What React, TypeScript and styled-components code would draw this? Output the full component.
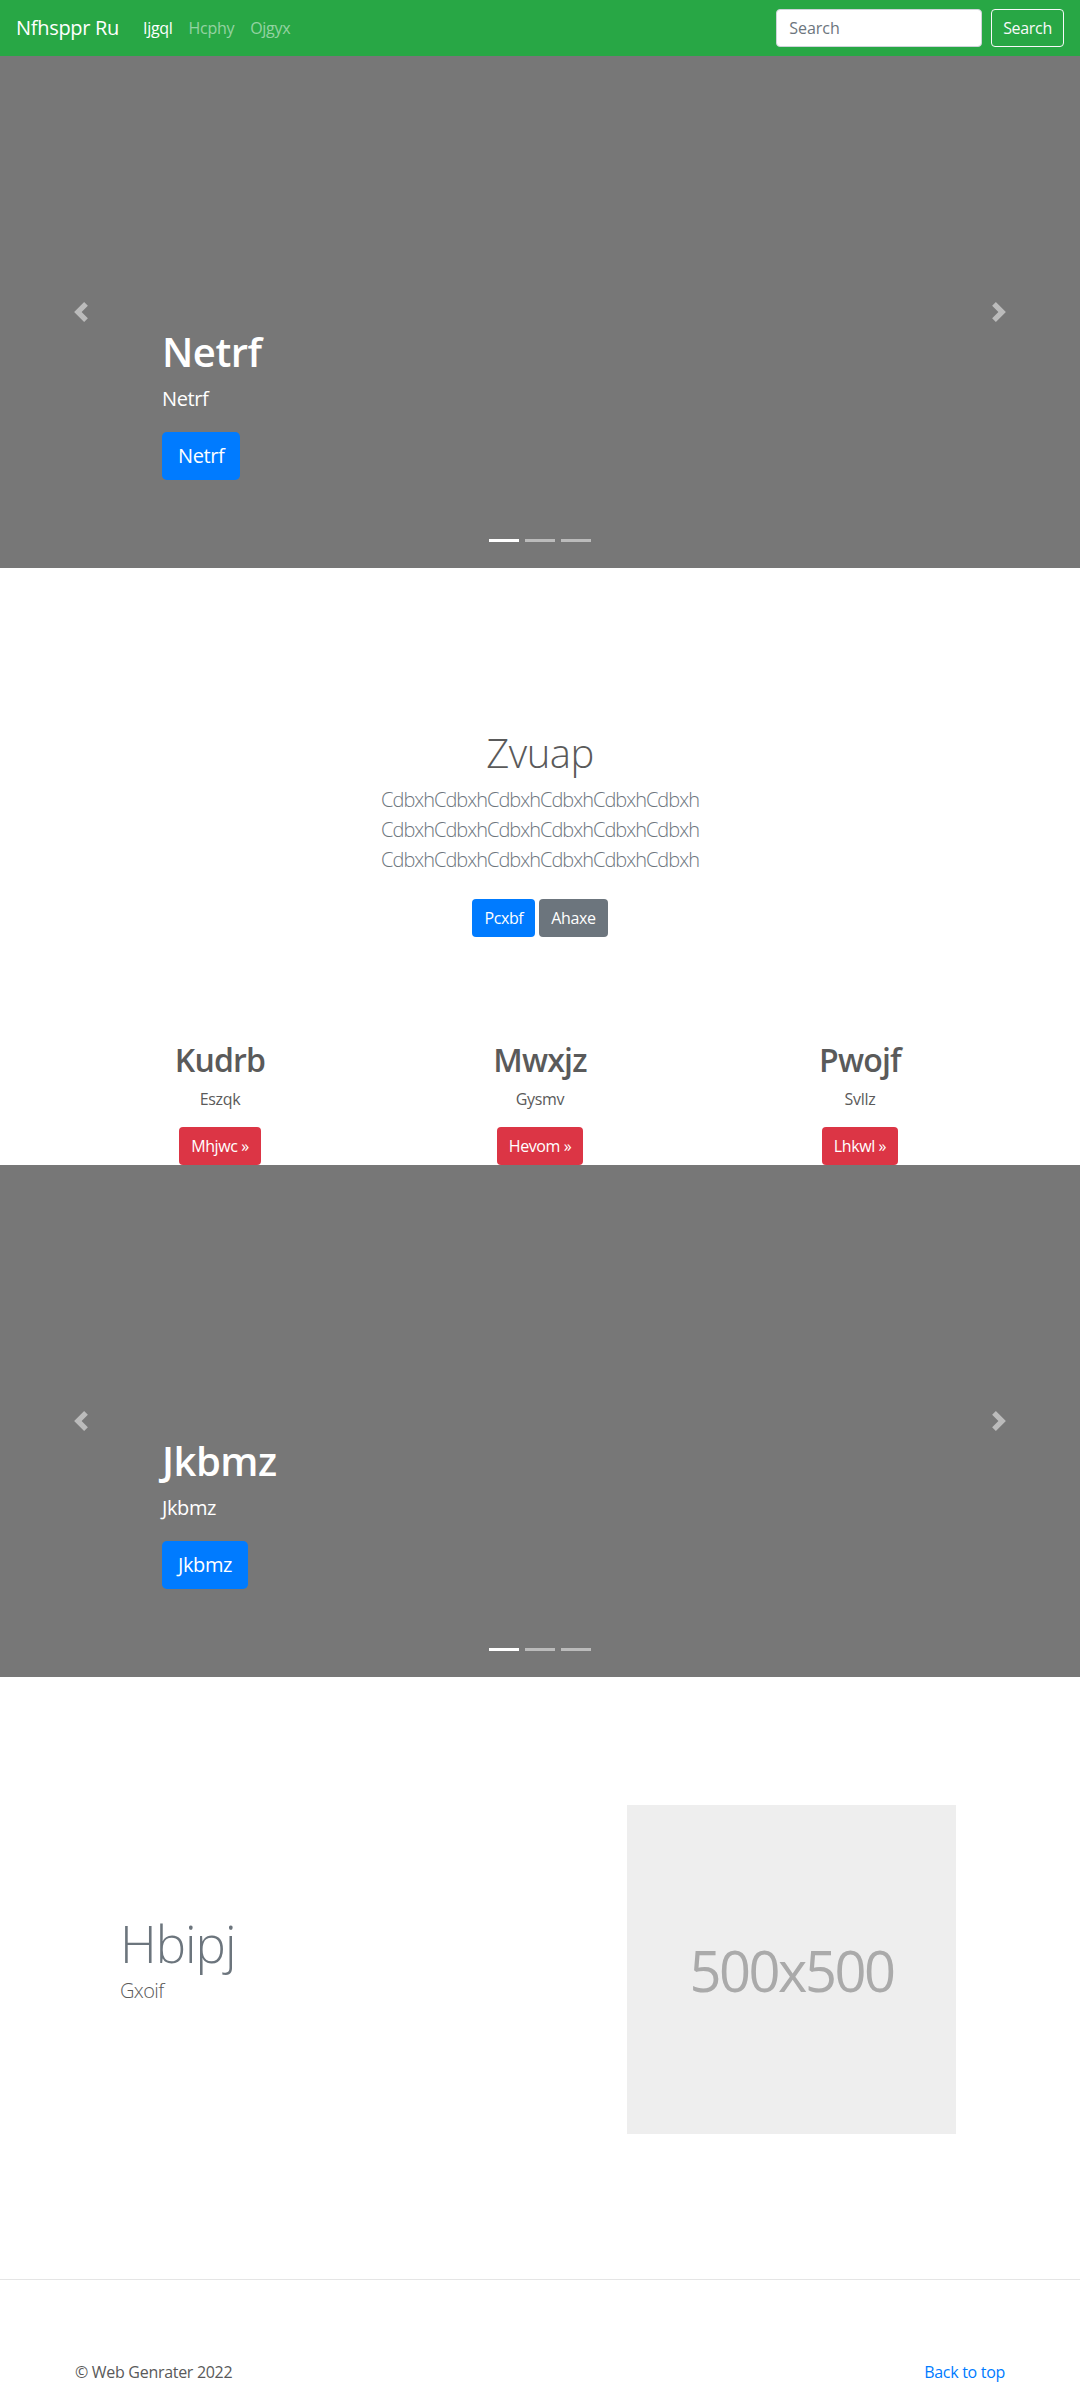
import React from "react";
import styled, { createGlobalStyle } from "styled-components";

const GlobalStyle = createGlobalStyle`
  * { box-sizing: border-box; }
  html, body { margin: 0; padding: 0; }
  body {
    font-family: "Open Sans", "Noto Sans", Arial, sans-serif;
    font-size: 16px;
    line-height: 1.5;
    color: #5a5a5a;
    background: #fff;
  }
`;

const Navbar = styled.nav`
  height: 56px;
  display: flex;
  align-items: center;
  padding: 0 16px;
  background: #28a745;
`;

const Brand = styled.a`
  font-size: 20px;
  line-height: 30px;
  color: #fff;
  margin-right: 16px;
  text-decoration: none;
  letter-spacing: -0.3px;
`;

const NavList = styled.div`
  display: flex;
  align-items: center;
`;

const NavLink = styled.a<{ $active?: boolean }>`
  padding: 8px;
  line-height: 24px;
  font-size: 16px;
  color: ${(p) => (p.$active ? "#fff" : "rgba(255,255,255,0.5)")};
  text-decoration: none;
  letter-spacing: -0.3px;
`;

const SearchForm = styled.form`
  margin-left: auto;
  display: flex;
  align-items: center;
  gap: 9px;
`;

const SearchInput = styled.input`
  width: 206px;
  height: 38px;
  padding: 6px 12px;
  font-family: inherit;
  font-size: 16px;
  color: #495057;
  background: #fff;
  border: 1px solid #ced4da;
  border-radius: 4px;
  outline: none;
  &::placeholder {
    color: #6c757d;
  }
`;

const OutlineButton = styled.button`
  height: 38px;
  padding: 0 11px;
  font-family: inherit;
  font-size: 16px;
  color: #f8f9fa;
  background: transparent;
  border: 1px solid #f8f9fa;
  border-radius: 4px;
  letter-spacing: -0.3px;
`;

const CarouselFrame = styled.section`
  position: relative;
  height: 512px;
  background: #777;
  overflow: hidden;
`;

const Caption = styled.div`
  position: absolute;
  left: 15%;
  right: 15%;
  bottom: 48px;
  padding: 20px 0;
  color: #fff;
  text-align: left;
  z-index: 2;
`;

const CaptionTitle = styled.h1`
  margin: 0 0 8px;
  font-size: 40px;
  line-height: 48px;
  font-weight: 600;
  letter-spacing: -0.5px;
`;

const CaptionText = styled.p`
  margin: 0 0 18px;
  font-size: 20px;
  line-height: 30px;
  letter-spacing: -0.4px;
`;

const CaptionActions = styled.div`
  display: flex;
  margin-bottom: 20px;
`;

const PrimaryLargeButton = styled.a`
  display: inline-flex;
  align-items: center;
  height: 48px;
  padding: 0 16px;
  font-size: 20px;
  color: #fff;
  background: #007bff;
  border-radius: 4.8px;
  text-decoration: none;
  letter-spacing: -0.4px;
`;

const Control = styled.a<{ $side: "left" | "right" }>`
  position: absolute;
  top: 0;
  bottom: 0;
  ${(p) => (p.$side === "left" ? "left: 0;" : "right: 0;")}
  width: 15%;
  display: flex;
  align-items: center;
  justify-content: center;
  opacity: 0.5;
  z-index: 1;
`;

const Indicators = styled.ol`
  position: absolute;
  left: 0;
  right: 0;
  bottom: 16px;
  margin: 0;
  padding: 0;
  list-style: none;
  display: flex;
  justify-content: center;
  z-index: 3;
`;

const Indicator = styled.li<{ $active?: boolean }>`
  width: 30px;
  height: 3px;
  margin: 10px 3px;
  background: ${(p) => (p.$active ? "#fff" : "rgba(255,255,255,0.5)")};
`;

const Hero = styled.section`
  padding-top: 161px;
  text-align: center;
`;

const HeroTitle = styled.h1`
  margin: 0 0 8px;
  font-size: 40px;
  line-height: 48px;
  font-weight: 300;
  color: #5a5a5a;
  letter-spacing: -0.5px;
`;

const HeroLead = styled.p`
  width: 420px;
  margin: 0 auto 16px;
  font-size: 20px;
  line-height: 30px;
  font-weight: 300;
  color: #6c757d;
  letter-spacing: -1px;
`;

const HeroActions = styled.div`
  display: flex;
  justify-content: center;
  gap: 4px;
  padding: 8px 0 24px;
`;

const SmallButton = styled.a<{ $tone: "primary" | "secondary" | "danger" }>`
  display: inline-flex;
  align-items: center;
  height: 38px;
  padding: 0 12px;
  font-size: 16px;
  color: #fff;
  border-radius: 4px;
  text-decoration: none;
  letter-spacing: -0.4px;
  background: ${(p) =>
    p.$tone === "primary" ? "#007bff" : p.$tone === "secondary" ? "#6c757d" : "#dc3545"};
`;

const Marketing = styled.div`
  width: 960px;
  margin: 80px auto 0;
  display: grid;
  grid-template-columns: repeat(3, 1fr);
  text-align: center;
`;

const MarketingCol = styled.div`
  display: flex;
  flex-direction: column;
  align-items: center;
  padding: 0 15px;
`;

const MarketingTitle = styled.h2`
  margin: 0 0 8px;
  font-size: 32px;
  line-height: 38.4px;
  font-weight: 600;
  color: #5a5a5a;
  letter-spacing: -0.8px;
`;

const MarketingText = styled.p`
  margin: 0 0 16px;
  font-size: 16px;
  line-height: 24px;
  letter-spacing: -0.3px;
`;

const Featurette = styled.section`
  padding: 128px 124px 145px 120px;
  display: grid;
  grid-template-columns: 1fr 329px;
  align-items: center;
`;

const FeaturetteHeading = styled.h2`
  margin: 0 0 8px;
  font-size: 51px;
  line-height: 50px;
  font-weight: 300;
  color: #6c757d;
  letter-spacing: -1px;
`;

const FeaturetteLead = styled.p`
  margin: 0 0 16px;
  font-size: 20px;
  line-height: 30px;
  font-weight: 300;
  color: #5a5a5a;
  letter-spacing: -0.6px;
`;

const Placeholder = styled.div`
  width: 329px;
  height: 329px;
  background: #eee;
  color: #aaa;
  display: flex;
  align-items: center;
  justify-content: center;
  font-size: 56px;
  letter-spacing: -2.5px;
`;

const Divider = styled.hr`
  margin: 0;
  border: 0;
  border-top: 1px solid rgba(0, 0, 0, 0.1);
`;

const Footer = styled.footer`
  padding: 80px 75px 0;
  display: flex;
  justify-content: space-between;
`;

const FooterText = styled.p`
  margin: 0 0 16px;
  line-height: 24px;
  letter-spacing: -0.3px;
`;

const FooterLink = styled.a`
  color: #007bff;
  text-decoration: none;
  line-height: 24px;
  letter-spacing: -0.3px;
`;

const ChevronLeft = () => (
  <svg width="20" height="20" viewBox="0 0 8 8" fill="#fff">
    <path d="M5.25 0l-4 4 4 4 1.5-1.5-2.5-2.5 2.5-2.5-1.5-1.5z" />
  </svg>
);

const ChevronRight = () => (
  <svg width="20" height="20" viewBox="0 0 8 8" fill="#fff">
    <path d="M2.75 0l-1.5 1.5 2.5 2.5-2.5 2.5 1.5 1.5 4-4-4-4z" />
  </svg>
);

const Carousel = ({ label }: { label: string }) => (
  <CarouselFrame>
    <Indicators>
      <Indicator $active />
      <Indicator />
      <Indicator />
    </Indicators>
    <Caption>
      <CaptionTitle>{label}</CaptionTitle>
      <CaptionText>{label}</CaptionText>
      <CaptionActions>
        <PrimaryLargeButton href="#">{label}</PrimaryLargeButton>
      </CaptionActions>
    </Caption>
    <Control $side="left" href="#">
      <ChevronLeft />
    </Control>
    <Control $side="right" href="#">
      <ChevronRight />
    </Control>
  </CarouselFrame>
);

const features = [
  { title: "Kudrb", text: "Eszqk", button: "Mhjwc »" },
  { title: "Mwxjz", text: "Gysmv", button: "Hevom »" },
  { title: "Pwojf", text: "Svllz", button: "Lhkwl »" },
];

export default function App() {
  return (
    <>
      <GlobalStyle />
      <Navbar>
        <Brand href="#">Nfhsppr Ru</Brand>
        <NavList>
          <NavLink $active href="#">Ijgql</NavLink>
          <NavLink href="#">Hcphy</NavLink>
          <NavLink href="#">Ojgyx</NavLink>
        </NavList>
        <SearchForm onSubmit={(e) => e.preventDefault()}>
          <SearchInput placeholder="Search" />
          <OutlineButton type="submit">Search</OutlineButton>
        </SearchForm>
      </Navbar>

      <Carousel label="Netrf" />

      <Hero>
        <HeroTitle>Zvuap</HeroTitle>
        <HeroLead>
          CdbxhCdbxhCdbxhCdbxhCdbxhCdbxh CdbxhCdbxhCdbxhCdbxhCdbxhCdbxh CdbxhCdbxhCdbxhCdbxhCdbxhCdbxh
        </HeroLead>
        <HeroActions>
          <SmallButton $tone="primary" href="#">Pcxbf</SmallButton>
          <SmallButton $tone="secondary" href="#">Ahaxe</SmallButton>
        </HeroActions>
        <Marketing>
          {features.map((f) => (
            <MarketingCol key={f.title}>
              <MarketingTitle>{f.title}</MarketingTitle>
              <MarketingText>{f.text}</MarketingText>
              <SmallButton $tone="danger" href="#">{f.button}</SmallButton>
            </MarketingCol>
          ))}
        </Marketing>
      </Hero>

      <Carousel label="Jkbmz" />

      <Featurette>
        <div>
          <FeaturetteHeading>Hbipj</FeaturetteHeading>
          <FeaturetteLead>Gxoif</FeaturetteLead>
        </div>
        <Placeholder>500x500</Placeholder>
      </Featurette>

      <Divider />

      <Footer>
        <FooterText>© Web Genrater 2022</FooterText>
        <FooterLink href="#">Back to top</FooterLink>
      </Footer>
    </>
  );
}
